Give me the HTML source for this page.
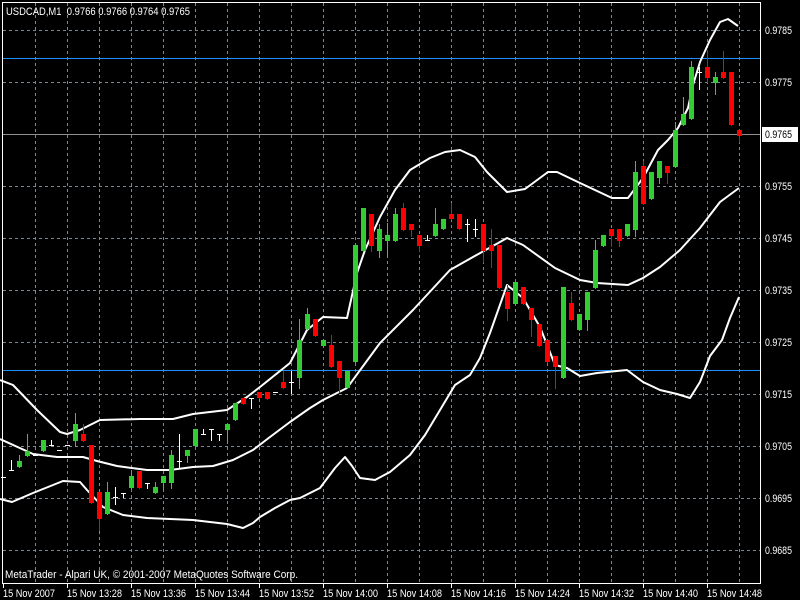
<!DOCTYPE html>
<html><head><meta charset="utf-8"><style>
html,body{margin:0;padding:0;background:#000;width:800px;height:600px;overflow:hidden}
svg{display:block}
text{font-family:"Liberation Sans",sans-serif;font-size:11px;fill:#fff}
</style></head><body>
<svg id="s" width="800" height="600" xmlns="http://www.w3.org/2000/svg" shape-rendering="crispEdges">
<rect width="800" height="600" fill="#000"/>
<g id="grid" stroke="#778899" stroke-width="1" stroke-dasharray="3,3"></g>
<line x1="3" y1="58.5" x2="760" y2="58.5" stroke="#1e90ff"/>
<line x1="3" y1="370.5" x2="760" y2="370.5" stroke="#1e90ff"/>
<line x1="3" y1="134.5" x2="760" y2="134.5" stroke="#909090"/>
<g id="bands" fill="none" stroke="#fff" stroke-width="2" shape-rendering="auto" stroke-linejoin="round">
<polyline points="0,380 13,385 37,410 60,432 67,434 80,430 100,420 140,419 173,419 193,414 227,410 247,397 260,387 290,363 307,330 323,317 347,318 357,273 365,250 380,217 395,190 410,170 430,158 445,152 460,150 475,157 487,172 507,192 525,189 548,172 557,172 580,183 612,198 628,198 643,178 658,150 668,140 678,128 688,108 693,85 700,62 710,40 720,22 728,19 738,26"/>
<polyline points="0,439 33,454 57,457 83,457 97,461 117,466 147,470 170,470 193,467 213,466 233,460 253,450 270,437 290,422 310,408 323,400 347,388 380,343 413,310 450,270 473,257 500,242 507,238 523,245 555,268 580,280 597,283 628,285 643,278 660,267 680,250 700,228 720,202 739,188"/>
<polyline points="0,499 12,502 33,493 63,481 80,482 87,490 103,507 123,515 147,518 193,520 227,524 243,528 253,523 260,517 275,508 290,500 300,498 320,488 335,468 345,457 352,466 360,478 375,480 390,472 410,455 425,435 440,410 455,385 470,375 480,358 490,333 507,285 523,298 540,327 555,365 567,368 580,376 597,373 627,370 643,382 660,390 677,394 690,398 700,382 710,356 722,340 730,318 739,297"/>
</g>
<g id="candles" shape-rendering="crispEdges"></g>
<g stroke="#fff" stroke-width="1">
<line x1="2.5" y1="2" x2="2.5" y2="584"/>
<line x1="760.5" y1="2" x2="760.5" y2="584"/>
<line x1="2" y1="583.5" x2="761" y2="583.5"/>
<line x1="2" y1="2.5" x2="761" y2="2.5"/>
</g>
<g id="ticks" stroke="#fff"></g>
<rect x="762" y="127" width="36" height="15" fill="#fff"/>
<text x="6" y="15" textLength="184" lengthAdjust="spacingAndGlyphs">USDCAD,M1&#160; 0.9766 0.9766 0.9764 0.9765</text>
<text x="5" y="578" textLength="293" lengthAdjust="spacingAndGlyphs">MetaTrader - Alpari UK, © 2001-2007 MetaQuotes Software Corp.</text>
<g id="py"></g>
<text x="3" y="597" textLength="52" lengthAdjust="spacingAndGlyphs">15 Nov 2007</text>
<g id="tx"></g>
</svg>
<script>
var NS="http://www.w3.org/2000/svg";
function el(p,n,a){var e=document.createElementNS(NS,n);for(var k in a)e.setAttribute(k,a[k]);p.appendChild(e);return e;}
var g=document.getElementById("grid");
[30,82,134,186,238,290,342,394,446,498,550].forEach(function(y){el(g,"line",{x1:3,y1:y+.5,x2:760,y2:y+.5});});
for(var x=35;x<760;x+=32)el(g,"line",{x1:x+.5,y1:3,x2:x+.5,y2:583});
var t=document.getElementById("ticks");
for(var x=3;x<760;x+=64)el(t,"line",{x1:x+.5,y1:583,x2:x+.5,y2:588});
var py=document.getElementById("py");
["0.9785","0.9775","0.9765","0.9755","0.9745","0.9735","0.9725","0.9715","0.9705","0.9695","0.9685"].forEach(function(s,i){
 var e=el(py,"text",{x:765,y:34+52*i,textLength:27,lengthAdjust:"spacingAndGlyphs"});e.textContent=s;if(i==2)e.setAttribute("style","fill:#000");});
var tx=document.getElementById("tx");
["13:28","13:36","13:44","13:52","14:00","14:08","14:16","14:24","14:32","14:40","14:48"].forEach(function(s,i){
 var e=el(tx,"text",{x:67+64*i,y:597,textLength:55,lengthAdjust:"spacingAndGlyphs"});e.textContent="15 Nov "+s;});
var D=[
[477,477,477,477,'w'],[470,470,460,470,'w'],[461,467,455,467,'g'],[451,456,434,456,'g'],[455,455,455,455,'w'],
[440,451,440,451,'g'],[445,445,440,445,'w'],[450,450,450,450,'w'],[445,445,445,445,'w'],[424,441,413,446,'g'],
[434,441,424,441,'r'],[445,503,445,503,'r'],[492,519,492,530,'r'],[492,514,482,514,'g'],[497,497,487,504,'w'],
[493,493,493,497,'w'],[476,488,470,488,'g'],[471,488,471,488,'r'],[483,483,483,488,'w'],[487,493,482,493,'g'],
[476,483,476,490,'g'],[455,483,450,488,'g'],[461,461,434,467,'w'],[450,456,450,462,'g'],[429,446,429,446,'g'],
[434,434,429,434,'w'],[429,429,429,440,'w'],[434,434,434,440,'w'],[424,430,424,442,'g'],[403,420,403,420,'g'],
[398,404,398,404,'r'],[398,398,398,408,'w'],[392,398,392,398,'r'],[392,399,392,399,'r'],[392,392,392,392,'w'],
[382,388,371,388,'r'],[382,382,371,393,'w'],[340,378,319,388,'g'],[314,329,308,329,'g'],[319,336,319,336,'r'],
[340,346,340,346,'g'],[345,367,335,367,'r'],[361,378,361,392,'r'],[371,388,371,388,'g'],[245,362,245,362,'g'],
[208,251,208,251,'g'],[214,246,214,251,'r'],[229,251,224,257,'g'],[235,241,223,257,'g'],[214,241,208,241,'g'],
[208,230,203,230,'r'],[224,230,224,236,'r'],[235,246,235,251,'r'],[240,240,235,240,'w'],[224,236,208,236,'g'],
[219,229,219,229,'g'],[214,219,203,219,'r'],[214,229,214,229,'r'],[224,224,219,241,'w'],[229,229,219,236,'w'],
[224,251,224,262,'r'],[245,251,229,267,'r'],[245,288,245,288,'r'],[292,309,285,320,'r'],[282,304,282,304,'g'],
[287,304,287,304,'r'],[308,320,308,336,'r'],[324,346,324,346,'r'],[340,362,340,362,'r'],[356,367,356,388,'r'],
[287,378,287,378,'g'],[303,320,292,320,'r'],[314,330,314,330,'g'],[292,320,292,330,'g'],[250,288,240,288,'g'],
[235,246,235,246,'g'],[229,236,229,246,'r'],[229,241,229,246,'r'],[224,236,224,236,'g'],[172,230,161,236,'g'],
[166,204,161,204,'r'],[172,199,172,199,'g'],[161,178,161,183,'g'],[166,173,166,183,'r'],[130,167,122,167,'g'],
[114,125,97,125,'g'],[67,119,61,119,'g'],[72,72,67,89,'w'],[67,78,50,82,'r'],[77,83,72,94,'g'],
[72,78,51,78,'r'],[72,125,72,125,'r'],[130,136,130,142,'r']];
var c=document.getElementById("candles");
D.forEach(function(d,k){
 var x=8*k+3;var col=d[4]=='g'?'#32cd32':d[4]=='r'?'#ff0000':'#ffffff';
 if(d[3]>d[2])el(c,"rect",{x:x,y:d[2],width:1,height:d[3]-d[2]+1,fill:col});
 if(d[4]=='w'){el(c,"rect",{x:x-2,y:d[0],width:5,height:1,fill:col});}
 else el(c,"rect",{x:x-2,y:d[0],width:5,height:Math.max(1,d[1]-d[0]),fill:col});
});
</script>
</body></html>
